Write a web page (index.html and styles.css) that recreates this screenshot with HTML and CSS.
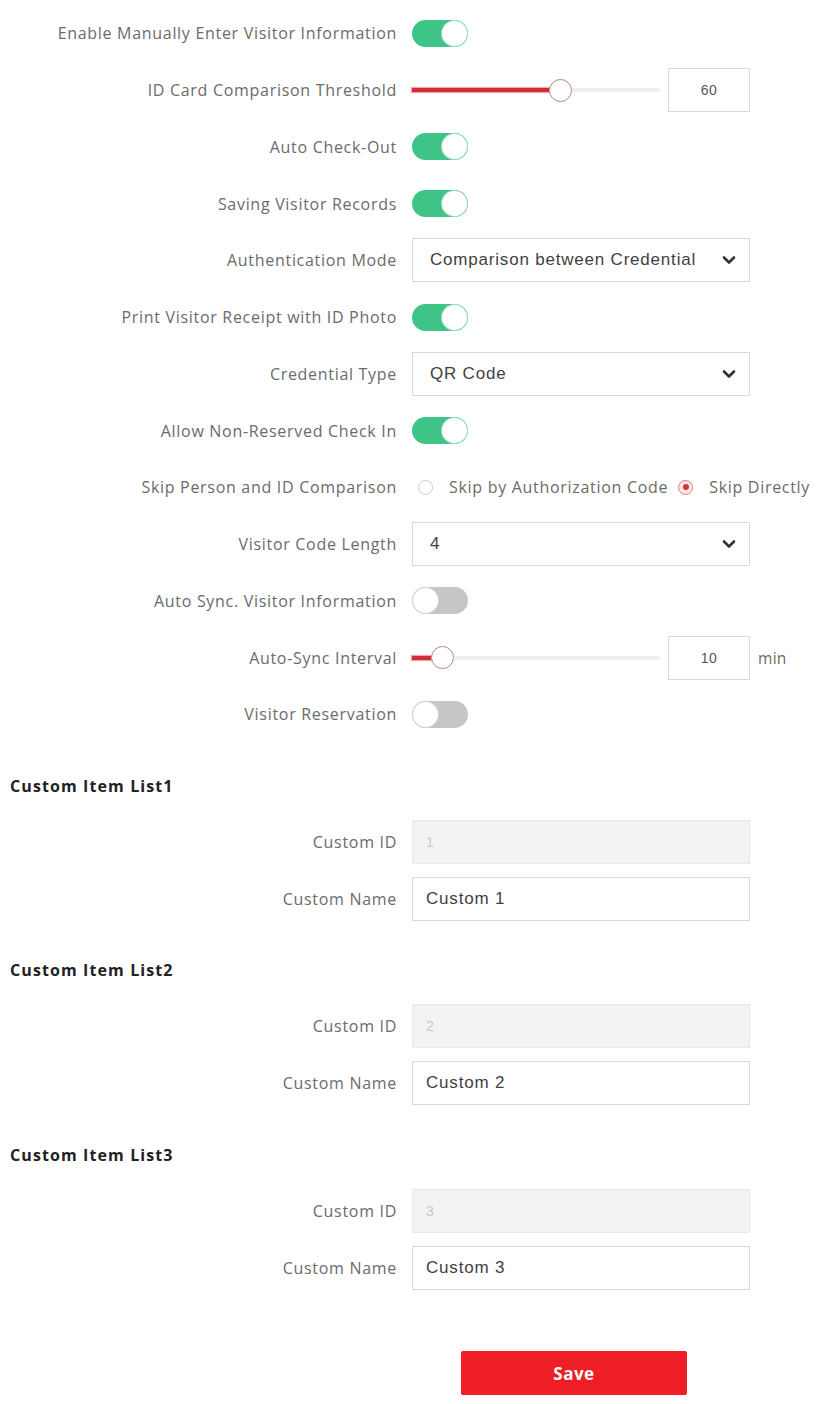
FILE: index.html
```html
<!DOCTYPE html>
<html lang="en">
<head>
    <meta charset="UTF-8">
    <meta name="viewport" content="width=device-width, initial-scale=1.0">
    <title>Visitor Settings</title>
    <link rel="stylesheet" href="styles.css">
</head>
<body>

<div class="form">
    <!-- General -->
    <div class="general">
        <div class="row">
            <span class="label">Enable Manually Enter Visitor Information</span>
            <div class="control"><span class="switch on"><span class="knob"></span></span></div>
        </div>
        <div class="row">
            <span class="label">ID Card Comparison Threshold</span>
            <div class="control">
                <div class="slider">
                    <span class="fill" style="width: 137px"></span>
                    <span class="handle"></span>
                    <span class="rest"></span>
                </div>
                <div class="num-box">60</div>
            </div>
        </div>
        <div class="row">
            <span class="label">Auto Check-Out</span>
            <div class="control"><span class="switch on"><span class="knob"></span></span></div>
        </div>
        <div class="row">
            <span class="label">Saving Visitor Records</span>
            <div class="control"><span class="switch on"><span class="knob"></span></span></div>
        </div>
        <div class="row">
            <span class="label">Authentication Mode</span>
            <div class="control">
                <div class="select">
                    <span>Comparison between Credential</span>
                    <svg class="chevron" width="14" height="10" viewBox="0 0 14 10"><polyline points="2,2.5 7,7.5 12,2.5" fill="none" stroke="#333" stroke-width="2.6" stroke-linecap="round" stroke-linejoin="round"/></svg>
                </div>
            </div>
        </div>
        <div class="row">
            <span class="label">Print Visitor Receipt with ID Photo</span>
            <div class="control"><span class="switch on"><span class="knob"></span></span></div>
        </div>
        <div class="row">
            <span class="label">Credential Type</span>
            <div class="control">
                <div class="select">
                    <span>QR Code</span>
                    <svg class="chevron" width="14" height="10" viewBox="0 0 14 10"><polyline points="2,2.5 7,7.5 12,2.5" fill="none" stroke="#333" stroke-width="2.6" stroke-linecap="round" stroke-linejoin="round"/></svg>
                </div>
            </div>
        </div>
        <div class="row">
            <span class="label">Allow Non-Reserved Check In</span>
            <div class="control"><span class="switch on"><span class="knob"></span></span></div>
        </div>
        <div class="row">
            <span class="label">Skip Person and ID Comparison</span>
            <div class="control radios">
                <span class="radio"></span>
                <span class="radio-text">Skip by Authorization Code</span>
                <span class="radio checked"></span>
                <span class="radio-text">Skip Directly</span>
            </div>
        </div>
        <div class="row">
            <span class="label">Visitor Code Length</span>
            <div class="control">
                <div class="select">
                    <span>4</span>
                    <svg class="chevron" width="14" height="10" viewBox="0 0 14 10"><polyline points="2,2.5 7,7.5 12,2.5" fill="none" stroke="#333" stroke-width="2.6" stroke-linecap="round" stroke-linejoin="round"/></svg>
                </div>
            </div>
        </div>
        <div class="row">
            <span class="label">Auto Sync. Visitor Information</span>
            <div class="control"><span class="switch"><span class="knob"></span></span></div>
        </div>
        <div class="row">
            <span class="label">Auto-Sync Interval</span>
            <div class="control">
                <div class="slider">
                    <span class="fill" style="width: 19px"></span>
                    <span class="handle"></span>
                    <span class="rest"></span>
                </div>
                <div class="num-box">10</div>
                <span class="unit">min</span>
            </div>
        </div>
        <div class="row">
            <span class="label">Visitor Reservation</span>
            <div class="control"><span class="switch"><span class="knob"></span></span></div>
        </div>
    </div>

    <!-- Custom Items -->
    <div class="custom-section">
        <h3>Custom Item List1</h3>
        <div class="row">
            <span class="label">Custom ID</span>
            <div class="control"><div class="text-box disabled">1</div></div>
        </div>
        <div class="row">
            <span class="label">Custom Name</span>
            <div class="control"><div class="text-box">Custom 1</div></div>
        </div>
    </div>

    <div class="custom-section">
        <h3>Custom Item List2</h3>
        <div class="row">
            <span class="label">Custom ID</span>
            <div class="control"><div class="text-box disabled">2</div></div>
        </div>
        <div class="row">
            <span class="label">Custom Name</span>
            <div class="control"><div class="text-box">Custom 2</div></div>
        </div>
    </div>

    <div class="custom-section">
        <h3>Custom Item List3</h3>
        <div class="row">
            <span class="label">Custom ID</span>
            <div class="control"><div class="text-box disabled">3</div></div>
        </div>
        <div class="row">
            <span class="label">Custom Name</span>
            <div class="control"><div class="text-box">Custom 3</div></div>
        </div>
    </div>

    <div class="actions">
        <button class="save-button">Save</button>
    </div>
</div>

</body>
</html>
```

FILE: styles.css
```css
body {
    margin: 0;
    padding: 0;
    background-color: #fff;
    font-family: "Open Sans", Lato, sans-serif;
    color: #666;
}
.form {
    padding-top: 5px;
}
.row {
    display: grid;
    grid-template-columns: 397px 1fr;
    column-gap: 15px;
    align-items: center;
    height: 56.75px;
}
.custom-section .row {
    height: 57px;
}
.label {
    text-align: right;
    white-space: nowrap;
    font-size: 16px;
    letter-spacing: 0.7px;
    color: #6b6b6b;
}
.control {
    display: flex;
    align-items: center;
}

/* switches */
.switch {
    width: 56px;
    height: 27px;
    border-radius: 14px;
    background-color: #c6c6c6;
    display: flex;
    align-items: center;
    padding: 1px;
    box-sizing: border-box;
}
.switch.on {
    background-color: #3fc488;
    justify-content: flex-end;
}
.knob {
    width: 25px;
    height: 25px;
    border-radius: 50%;
    background-color: #fff;
    box-shadow: 0 0 0 1px #d4d4d4;
}
.switch.on .knob {
    box-shadow: 0 0 0 1px #9fdcbf;
}

/* sliders */
.slider {
    width: 248px;
    display: flex;
    align-items: center;
    margin-right: 8px;
}
.fill {
    height: 4px;
    background-color: #cf2d3a;
    box-shadow: 0 0 1px 1px #f2a9ae;
}
.handle {
    width: 23px;
    height: 23px;
    border-radius: 50%;
    border: 1.5px solid #b98188;
    background-color: #fff;
    box-sizing: border-box;
    flex-shrink: 0;
}
.rest {
    flex: 1;
    height: 4px;
    background-color: #efefef;
}
.num-box {
    width: 82px;
    height: 44px;
    box-sizing: border-box;
    border: 1px solid #d9d9d9;
    display: flex;
    align-items: center;
    justify-content: center;
    font-family: "Liberation Sans", Arial, sans-serif;
    font-size: 14px;
    letter-spacing: 0.5px;
    color: #555;
}
.unit {
    margin-left: 8px;
    font-size: 15.5px;
    letter-spacing: 0.3px;
    color: #6b6b6b;
}

/* selects and text boxes */
.select, .text-box {
    width: 338px;
    height: 44px;
    box-sizing: border-box;
    border: 1px solid #d9d9d9;
    display: flex;
    align-items: center;
    font-family: "Liberation Sans", Arial, sans-serif;
    font-size: 17px;
    letter-spacing: 0.8px;
    color: #3f3f3f;
}
.select {
    justify-content: space-between;
    padding: 0 13px 0 17px;
}
.text-box {
    padding-left: 13px;
}
.text-box.disabled {
    background-color: #f3f3f3;
    border-color: #e8e8e8;
    color: #c8c8c8;
    font-size: 14px;
}

/* radios */
.radios {
    font-size: 16px;
    letter-spacing: 0.7px;
}
.radio {
    width: 15px;
    height: 15px;
    border-radius: 50%;
    border: 1px solid #cccccc;
    box-sizing: border-box;
    margin-left: 6px;
    display: flex;
    align-items: center;
    justify-content: center;
    flex-shrink: 0;
}
.radio.checked {
    margin-left: 10px;
    border-color: #e47a80;
    background-color: #fde9ea;
}
.radio.checked::after {
    content: "";
    width: 6px;
    height: 6px;
    border-radius: 50%;
    background-color: #d4323c;
}
.radio-text {
    margin-left: 16px;
    white-space: nowrap;
    color: #6b6b6b;
}

/* custom items */
.custom-section h3 {
    margin: 28px 0 12.5px 10px;
    line-height: 30px;
    height: 30px;
    font-size: 16px;
    font-weight: 700;
    letter-spacing: 1.1px;
    color: #222;
}
.actions {
    padding: 55px 0 8px 461px;
}
.save-button {
    width: 226px;
    height: 44px;
    border: none;
    border-radius: 2px;
    background-color: #ef1d26;
    color: #fff;
    font-family: "Open Sans", sans-serif;
    font-size: 17px;
    font-weight: 700;
    letter-spacing: 0.5px;
}
```
